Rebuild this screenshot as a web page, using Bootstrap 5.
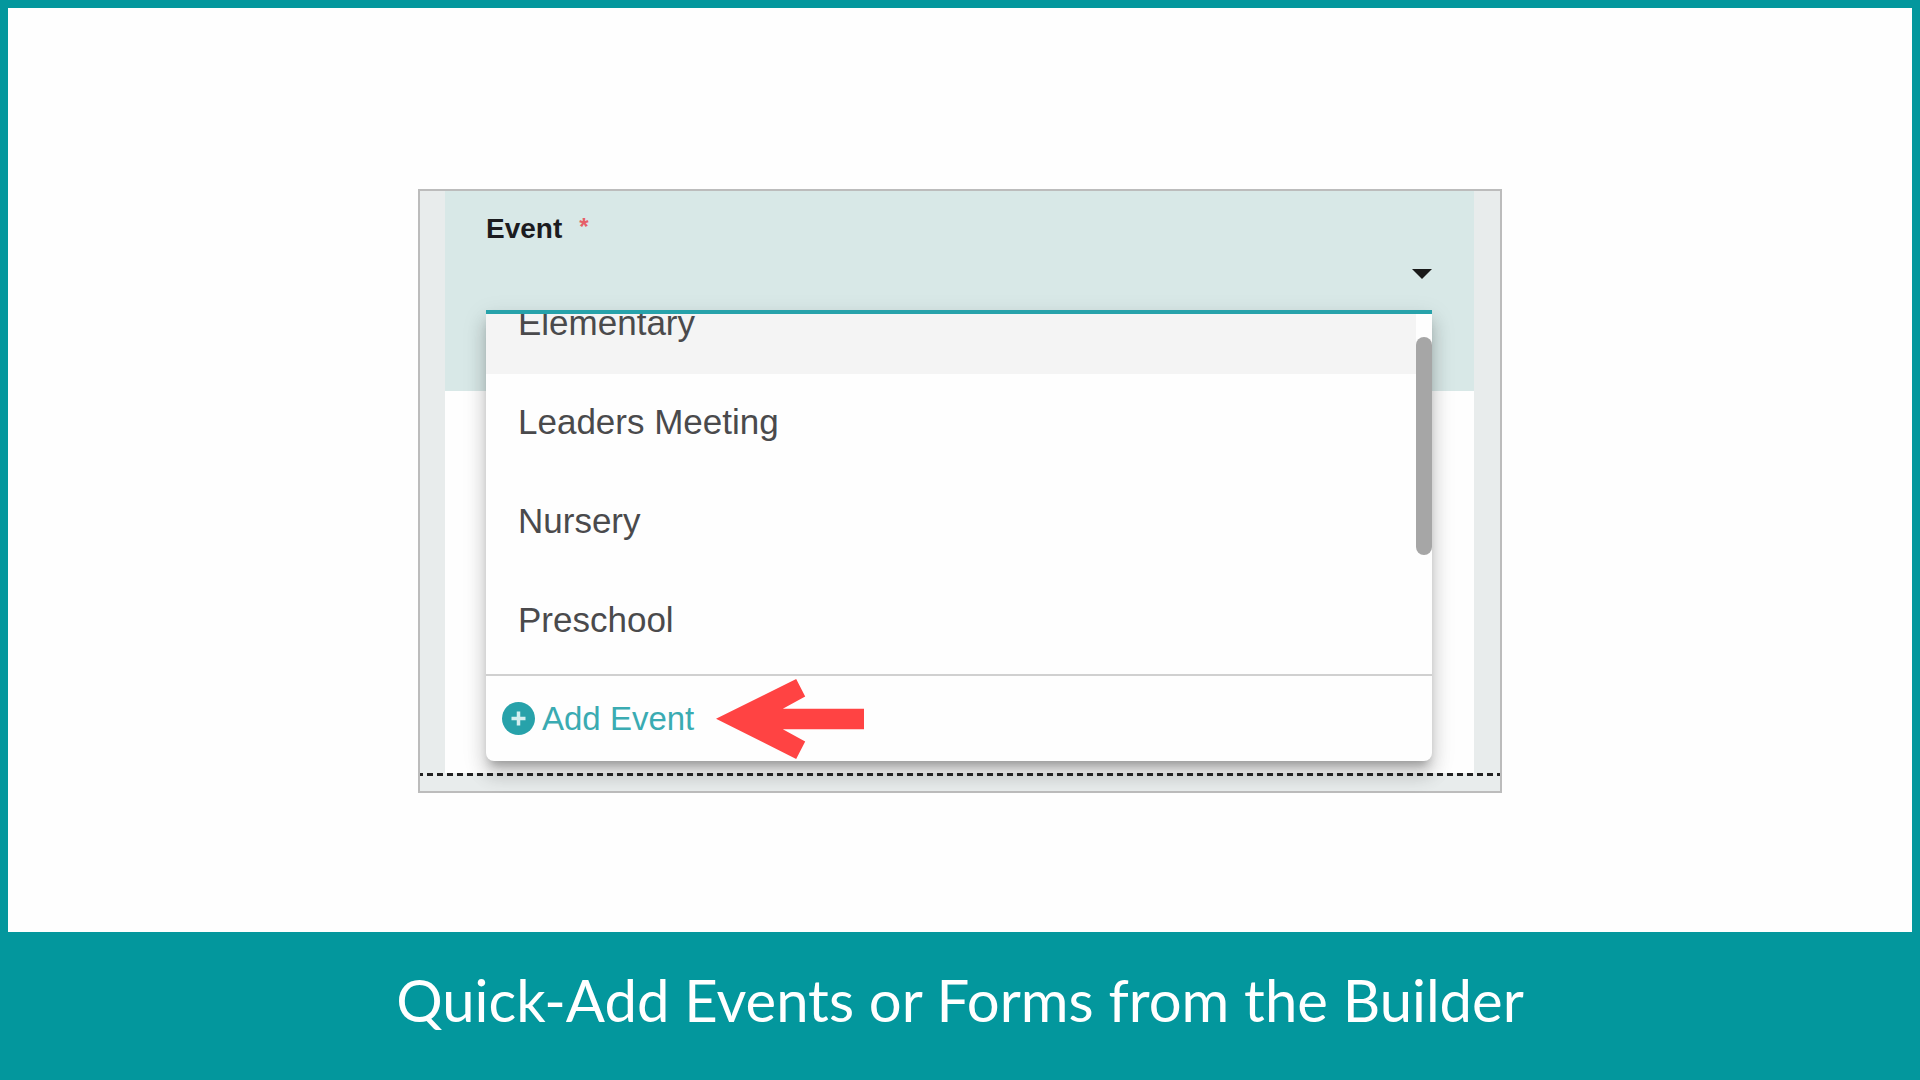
<!DOCTYPE html>
<html lang="en">
<head>
<meta charset="utf-8">
<meta name="viewport" content="width=device-width, initial-scale=1">
<title>Quick-Add Events or Forms from the Builder</title>
<link href="https://cdn.jsdelivr.net/npm/bootstrap@5.3.0/dist/css/bootstrap.min.css" rel="stylesheet">
<style>
  :root { --brand: #03979d; --accent: #27a2aa; }
  body { background: var(--brand); font-family: "Liberation Sans", Arial, sans-serif; }
  .slide { padding: 8px 8px 0; }
  .stage { background: #fefefe; padding-top: 42px; }
  .caption-bar { min-height: 148px; padding-bottom: 12px; }
  .caption-bar h1 { font-family: Lato, sans-serif; font-size: 58px; line-height: 70px; }

  .builder { max-width: 1084px; border: 2px solid #bcbcbc; background: #e8ecec; }
  .canvas { margin: 0 26px 0 25px; padding: 0 42px 12px 41px;
            background: linear-gradient(#d8e8e7 200px, #fefefe 200px); }
  .field-label { padding-top: 19px; font-size: 28px; line-height: 37px; color: #1b1b1f; gap: 17px; }
  .required { color: #e65f68; font-size: 24px; line-height: 34px; }
  .event-select { height: 63px; border: 0; border-radius: 0; padding: 0 24px 0 0; appearance: none;
    background: transparent url("data:image/svg+xml,%3Csvg xmlns='http://www.w3.org/2000/svg' viewBox='0 0 20 10'%3E%3Cpath d='M0 0h20L10 10z' fill='%231a1a1a'/%3E%3C/svg%3E") no-repeat right 22px / 20px 10px; }
  .event-menu { border-top: 4px solid var(--accent); border-radius: 0 0 8px 8px; background: #fefefe;
    box-shadow: 0 8px 10px -4px rgba(0,0,0,.26), 0 14px 18px 2px rgba(0,0,0,.12), 0 8px 24px 2px rgba(0,0,0,.1); }
  .options { height: 360px; padding: 0 16px 3px 0; }
  .option { height: 99px; padding: 0 32px 4px; border: 0; background: transparent; color: #4a4a4c;
    font-size: 35px; line-height: 40px; }
  .option.current { background: #f4f4f4; }
  .thumb { top: 23px; right: 0; width: 16px; height: 218px; border-radius: 8px; background: #a6a6a6; }
  .menu-footer { height: 87px; border-top: 2px solid #d0d0d0; padding-left: 16px; gap: 22px; }
  .add-event { padding: 0; border: 0; background: none; color: #3aabb2; font-size: 33px; line-height: 40px; gap: 7px; }
  .dashes { height: 3px; background: repeating-linear-gradient(90deg, #222 0 6px, transparent 6px 10px) -3px 0; }
  .tail { height: 15px; }
</style>
</head>
<body>
<div class="slide d-flex flex-column min-vh-100">
  <main class="stage flex-grow-1 d-flex align-items-center justify-content-center">
    <section class="builder w-100">
      <div class="canvas">
        <label class="field-label d-flex fw-bold" for="event">Event <span class="required">*</span></label>
        <select class="event-select d-block w-100" id="event" required><option value=""></option></select>
        <div class="event-menu">
          <div class="options position-relative overflow-hidden d-flex flex-column justify-content-end">
            <button type="button" class="option current flex-shrink-0 text-start">Elementary</button>
            <button type="button" class="option flex-shrink-0 text-start">Leaders Meeting</button>
            <button type="button" class="option flex-shrink-0 text-start">Nursery</button>
            <button type="button" class="option flex-shrink-0 text-start">Preschool</button>
            <div class="thumb position-absolute"></div>
          </div>
          <div class="menu-footer d-flex align-items-center">
            <button type="button" class="add-event d-flex align-items-center">
              <svg width="33" height="33" viewBox="0 0 66 66" aria-hidden="true"><circle cx="33" cy="33" r="33" fill="#27a2aa"/><path d="M33 19v28M19 33h28" stroke="#d3eff0" stroke-width="7"/></svg>
              Add Event
            </button>
            <svg width="148" height="81" viewBox="920 115 443 242" aria-hidden="true"><path d="M920 237 1160 118 1187 170 1120 207H1363V268H1120L1187 305 1160 357z" fill="#ff4343"/></svg>
          </div>
        </div>
      </div>
      <div class="dashes position-relative"></div>
      <div class="tail"></div>
    </section>
  </main>
  <footer class="caption-bar d-flex align-items-center justify-content-center">
    <h1 class="m-0 fw-normal text-white text-center">Quick-Add Events or Forms from the Builder</h1>
  </footer>
</div>
<script src="https://cdn.jsdelivr.net/npm/bootstrap@5.3.0/dist/js/bootstrap.bundle.min.js"></script>
</body>
</html>
